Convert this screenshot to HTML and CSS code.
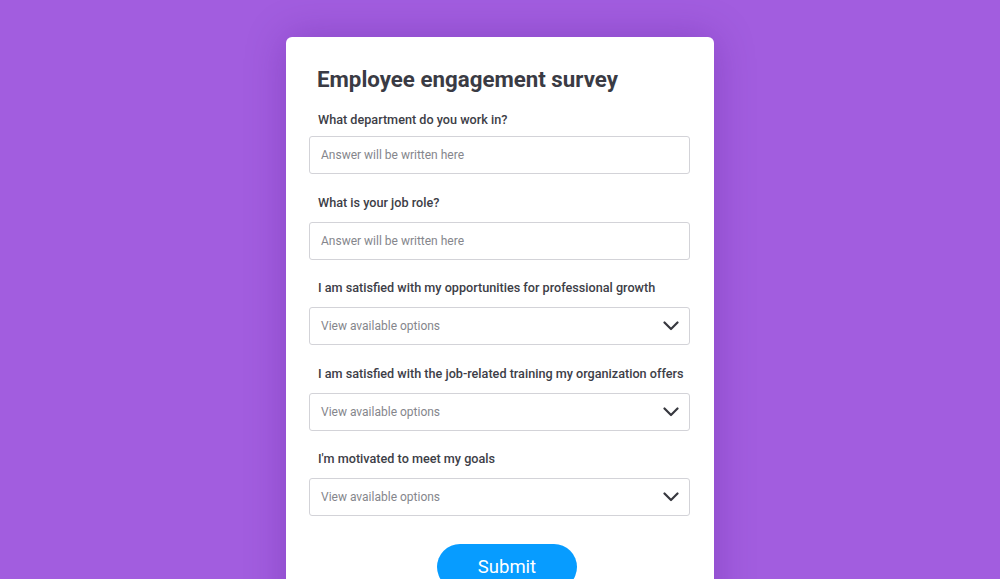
FILE: index.html
```html
<!DOCTYPE html>
<html lang="en">
<head>
<meta charset="utf-8">
<title>Employee engagement survey</title>
<link rel="stylesheet" href="styles.css">
</head>
<body>
<main class="survey">
  <h1 class="survey-title">Employee engagement survey</h1>

  <div class="field first">
    <label class="field-label">What department do you work in?</label>
    <div class="field-box"><span class="placeholder">Answer will be written here</span></div>
  </div>

  <div class="field">
    <label class="field-label">What is your job role?</label>
    <div class="field-box"><span class="placeholder">Answer will be written here</span></div>
  </div>

  <div class="field">
    <label class="field-label">I am satisfied with my opportunities for professional growth</label>
    <div class="field-box select">
      <span class="placeholder">View available options</span>
      <svg class="chevron" viewBox="0 0 16 10" width="16" height="10"><path d="M1.5 1.5 L8 8 L14.5 1.5" fill="none" stroke="#37383f" stroke-width="2.2" stroke-linecap="round" stroke-linejoin="round"/></svg>
    </div>
  </div>

  <div class="field">
    <label class="field-label">I am satisfied with the job-related training my organization offers</label>
    <div class="field-box select">
      <span class="placeholder">View available options</span>
      <svg class="chevron" viewBox="0 0 16 10" width="16" height="10"><path d="M1.5 1.5 L8 8 L14.5 1.5" fill="none" stroke="#37383f" stroke-width="2.2" stroke-linecap="round" stroke-linejoin="round"/></svg>
    </div>
  </div>

  <div class="field">
    <label class="field-label">I'm motivated to meet my goals</label>
    <div class="field-box select">
      <span class="placeholder">View available options</span>
      <svg class="chevron" viewBox="0 0 16 10" width="16" height="10"><path d="M1.5 1.5 L8 8 L14.5 1.5" fill="none" stroke="#37383f" stroke-width="2.2" stroke-linecap="round" stroke-linejoin="round"/></svg>
    </div>
  </div>

  <div class="actions">
    <button class="submit" type="button">Submit</button>
  </div>
</main>
</body>
</html>
```

FILE: styles.css
```css
html, body {
  margin: 0;
  padding: 0;
  height: 100%;
  overflow: hidden;
}

body {
  background: #a25ddf;
  font-family: Roboto, "Liberation Sans", Arial, sans-serif;
}

.survey {
  width: 428px;
  box-sizing: border-box;
  margin: 37px auto 0;
  padding: 28px 24px 40px 23px;
  background: #ffffff;
  border-radius: 6px;
  box-shadow: 0 0 40px rgba(70, 10, 130, 0.28);
}

.survey-title {
  margin: 0 0 19px 8px;
  font-size: 22.3px;
  line-height: 28px;
  font-weight: 700;
  color: #3a3b44;
}

.field {
  margin-bottom: 20.5px;
}

.field-label {
  display: block;
  margin: 0 0 11px 9px;
  font-size: 12.65px;
  line-height: 16px;
  font-weight: 500;
  color: #3d3e47;
  white-space: nowrap;
}

.first .field-label {
  margin-bottom: 8px;
}

.field-box {
  height: 38px;
  box-sizing: border-box;
  border: 1px solid #d3d3d8;
  border-radius: 3px;
  display: flex;
  align-items: center;
  padding: 0 10px 0 11px;
}

.placeholder {
  font-size: 12px;
  color: #85868c;
}

.select {
  justify-content: space-between;
}

.chevron {
  display: block;
}

/* margin collapses with the last field's bottom margin */
.actions {
  margin-top: 28px;
}

.submit {
  margin-left: 128px;
  width: 140px;
  height: 46px;
  border: none;
  border-radius: 23px;
  background: #079cff;
  color: #ffffff;
  font-family: Roboto, "Liberation Sans", Arial, sans-serif;
  font-size: 18.5px;
  padding: 0;
}
```
